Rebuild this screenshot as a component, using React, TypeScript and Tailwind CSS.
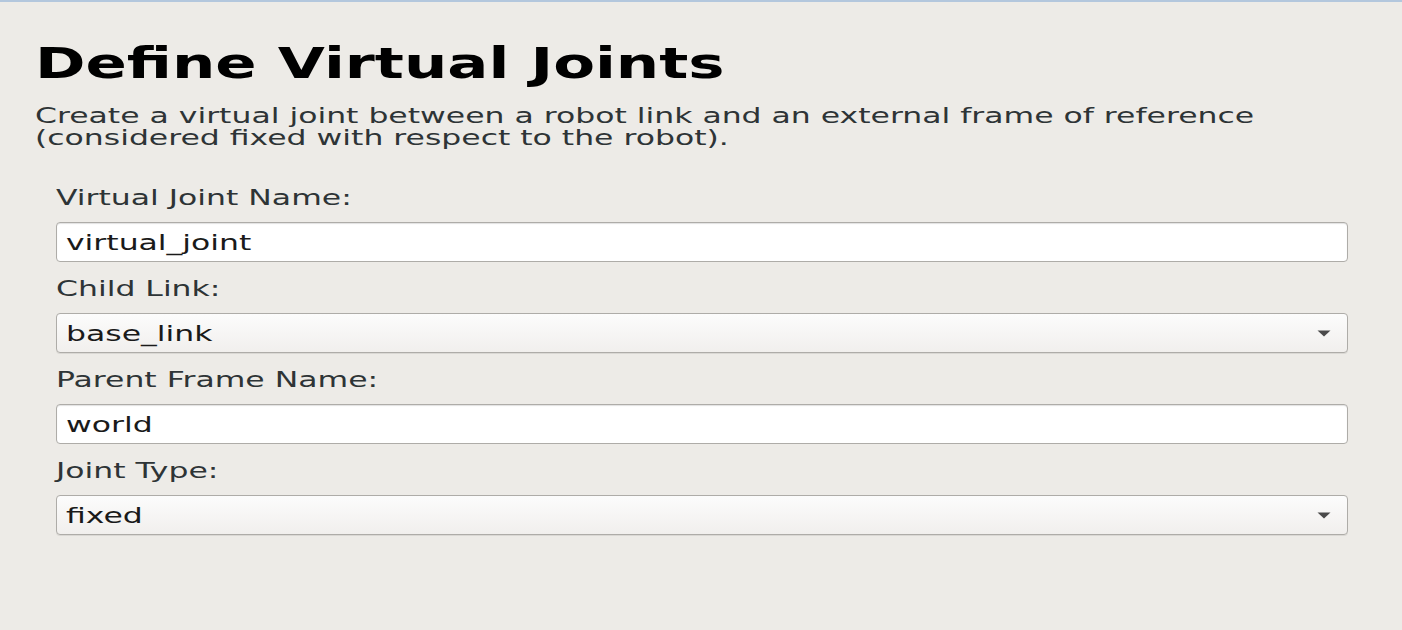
import React from "react";

// form rows
const FIELDS = [
  { key: "name", label: "Virtual Joint Name:", value: "virtual_joint", select: false },
  { key: "child", label: "Child Link:", value: "base_link", select: true },
  { key: "parent", label: "Parent Frame Name:", value: "world", select: false },
  { key: "type", label: "Joint Type:", value: "fixed", select: true },
];

const font = { fontFamily: '"DejaVu Sans", Verdana, sans-serif' };

// the screenshot is stretched wide, so text gets a matching horizontal scale
const wide = "inline-block origin-left scale-x-[1.43] whitespace-nowrap";

function Field({ label, value, select }: { label: string; value: string; select: boolean }) {
  return (
    <div className="flex flex-col">
      <div className="h-[51px] flex items-center text-[22px] text-[#2e3436] pt-[2px]">
        <span className={wide}>{label}</span>
      </div>
      <div
        className={
          "h-[40px] flex items-center justify-between rounded-[4px] border border-[#aeaca8] pl-[9px] pr-[10px] text-[22px] text-[#1a1a1a] " +
          (select
            ? "bg-gradient-to-b from-[#fcfcfc] to-[#f1efed] shadow-[0_1px_0_rgba(0,0,0,0.08)]"
            : "bg-white shadow-[inset_0_1px_1px_rgba(0,0,0,0.12)]")
        }
      >
        <span className={wide}>{value}</span>
        {select && (
          <svg width="14" height="7" viewBox="0 0 14 7" className="mr-[6px]">
            <path d="M0.5 0.5h13L7 6.5z" fill="#4a4a4a" />
          </svg>
        )}
      </div>
    </div>
  );
}

export default function App() {
  return (
    <div className="w-[1402px] h-[630px] bg-[#edebe7] border-t-2 border-t-[#b3c7dd] overflow-hidden" style={font}>
      <div className="pl-[35px] pr-[54px] pt-[34px]">
        <h1 className="text-[42px] font-bold text-black leading-[56px]">
          <span className="inline-block origin-left scale-x-[1.45] whitespace-nowrap">Define Virtual Joints</span>
        </h1>
        <p className="mt-[13px] text-[22px] leading-[22px] text-[#2e3436]">
          <span className={wide}>Create a virtual joint between a robot link and an external frame of reference</span>
          <br />
          <span className={wide}>(considered fixed with respect to the robot).</span>
        </p>
        <div className="pl-[21px] mt-[22px]">
          {FIELDS.map((f) => (
            <Field key={f.key} label={f.label} value={f.value} select={f.select} />
          ))}
        </div>
      </div>
    </div>
  );
}
